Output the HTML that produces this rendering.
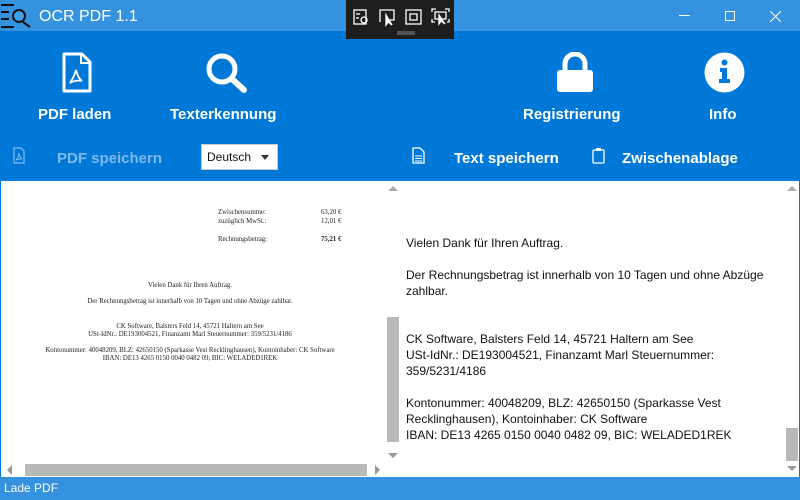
<!DOCTYPE html>
<html><head><meta charset="utf-8"><style>
*{margin:0;padding:0;box-sizing:border-box}
body{width:800px;height:500px;overflow:hidden;background:#0078d7;font-family:"Liberation Sans",sans-serif;position:relative}
.a{position:absolute}
.lbl{color:#fff;font-weight:bold;font-size:15px;white-space:nowrap}
.sm{color:#fff;font-weight:bold;font-size:15px;white-space:nowrap}
.doc{font-family:"Liberation Serif",serif;font-size:6.8px;color:#222;white-space:nowrap}
.rt{font-size:12px;color:#111;white-space:nowrap;line-height:16px}
.tri{width:0;height:0;position:absolute}
</style></head><body>
<div class="a" style="left:0;top:0;width:800px;height:31px;background:#3592de"></div>
<svg class="a" style="left:0;top:2px" width="32" height="28" viewBox="0 0 32 28">
<g stroke="#111" stroke-width="2"><line x1="1" y1="3" x2="14" y2="3"/><line x1="1" y1="10" x2="9" y2="10"/><line x1="1" y1="17" x2="9" y2="17"/><line x1="1" y1="25" x2="14" y2="25"/><line x1="23" y1="20" x2="30" y2="25"/></g>
<circle cx="19" cy="14" r="6" fill="#3aa0f0" stroke="#111" stroke-width="2"/></svg>
<div class="a" style="left:39px;top:8px;color:#fff;font-size:16px">OCR PDF 1.1</div>
<div class="a" style="left:346px;top:0;width:108px;height:39px;background:#1e1e1e"></div>
<svg class="a" style="left:346px;top:0" width="108" height="39" viewBox="0 0 108 39" fill="none" stroke="#fff" stroke-width="1.3">
<rect x="8" y="10" width="12" height="14"/><line x1="10" y1="14" x2="14" y2="14"/><line x1="10" y1="18" x2="13" y2="18"/><circle cx="18" cy="20" r="3"/>
<path d="M34 22V10h14v10h-6"/><path d="M40 15l0 10 2-3 4 3z" fill="#fff"/>
<rect x="60" y="10" width="15" height="14"/><rect x="64" y="14" width="7" height="6"/>
<path d="M86 12v-3h4M99 9h4v3M86 19v3h3M103 19v3h-2"/><rect x="89" y="12" width="11" height="7"/><path d="M93 15l0 9 2-3 4 3z" fill="#fff"/>
<line x1="51" y1="32" x2="69" y2="32" stroke="#888" stroke-width="1"/><line x1="51" y1="34" x2="69" y2="34" stroke="#888" stroke-width="1"/>
</svg>
<div class="a" style="left:679px;top:15px;width:11px;height:1px;background:#fff"></div>
<div class="a" style="left:725px;top:11px;width:10px;height:10px;border:1px solid #fff"></div>
<svg class="a" style="left:770px;top:11px" width="11" height="11"><path d="M0 0L11 11M11 0L0 11" stroke="#fff"/></svg>
<svg class="a" style="left:61px;top:52px" width="31" height="41" viewBox="0 0 31 41"><path d="M3 2h18l8 8v29H3z" fill="none" stroke="#fff" stroke-width="3" stroke-linejoin="round"/><path d="M20 2v9h9" fill="none" stroke="#fff" stroke-width="2"/><path d="M15 18c-1 4-4 10-6 13 3-2 8-3 12-2-3-2-5-7-6-11z" fill="none" stroke="#fff" stroke-width="1.8"/></svg>
<svg class="a" style="left:205px;top:52px" width="44" height="42" viewBox="0 0 44 42"><circle cx="17" cy="17" r="13" fill="none" stroke="#fff" stroke-width="5"/><line x1="27" y1="27" x2="39" y2="38" stroke="#fff" stroke-width="6" stroke-linecap="round"/></svg>
<div class="a lbl" style="left:38px;top:106px">PDF laden</div>
<div class="a lbl" style="left:170px;top:106px">Texterkennung</div>
<svg class="a" style="left:556px;top:52px" width="38" height="41" viewBox="0 0 38 41"><path d="M9 19v-7a10 10 0 0 1 20 0v7" fill="none" stroke="#fff" stroke-width="5"/><rect x="1" y="18" width="36" height="22" rx="3" fill="#fff"/></svg>
<div class="a lbl" style="left:523px;top:106px">Registrierung</div>
<svg class="a" style="left:704px;top:52px" width="41" height="41" viewBox="0 0 41 41"><circle cx="20.5" cy="20.5" r="20" fill="#fff"/><circle cx="20.5" cy="10.5" r="3" fill="#0078d7"/><path d="M16 16h7v11h3v4H15v-4h3v-7h-2z" fill="#0078d7"/></svg>
<div class="a lbl" style="left:709px;top:106px">Info</div>
<svg class="a" style="left:13px;top:147px" width="12" height="17" viewBox="0 0 12 17" opacity="0.5"><path d="M1 1h7l3 3v12H1z" fill="none" stroke="#fff" stroke-width="1.2"/><path d="M6 6c0 2-1 5-3 7 2-1 4-1 6-1-2-1-3-4-3-6z" fill="none" stroke="#fff"/></svg>
<div class="a sm" style="left:57px;top:150px;color:#7fb8ea">PDF speichern</div>
<div class="a" style="left:201px;top:144px;width:77px;height:26px;background:#fff;border:1px solid #ccc"></div>
<div class="a" style="left:207px;top:150px;font-size:12px;color:#111">Deutsch</div>
<div class="tri" style="left:261px;top:155px;border-left:4px solid transparent;border-right:4px solid transparent;border-top:5px solid #333"></div>
<svg class="a" style="left:412px;top:147px" width="13" height="17" viewBox="0 0 13 17"><path d="M1 1h7l4 4v11H1z" fill="none" stroke="#fff" stroke-width="1.3"/><path d="M3 9h7M3 11.5h7M3 14h7" stroke="#fff"/></svg>
<div class="a sm" style="left:454px;top:150px">Text speichern</div>
<svg class="a" style="left:592px;top:147px" width="13" height="17" viewBox="0 0 13 17"><rect x="1" y="3" width="11" height="13" rx="1" fill="none" stroke="#fff" stroke-width="1.3"/><rect x="4" y="1" width="5" height="3" fill="#fff"/></svg>
<div class="a sm" style="left:622px;top:150px">Zwischenablage</div>
<div class="a" style="left:1px;top:181px;width:798px;height:296px;background:#fff"></div>
<div class="a doc" style="left:218px;top:209px">Zwischensumme:</div><div class="a doc" style="left:321px;top:209px">63,20 €</div>
<div class="a doc" style="left:218px;top:218px">zuzüglich MwSt.:</div><div class="a doc" style="left:321px;top:218px">12,01 €</div>
<div class="a doc" style="left:218px;top:236px">Rechnungsbetrag:</div><div class="a doc" style="left:321px;top:236px;font-weight:bold">75,21 €</div>
<div class="a doc" style="left:0;width:380px;text-align:center;top:282px">Vielen Dank für Ihren Auftrag.</div>
<div class="a doc" style="left:0;width:380px;text-align:center;top:298px">Der Rechnungsbetrag ist innerhalb von 10 Tagen und ohne Abzüge zahlbar.</div>
<div class="a doc" style="left:0;width:380px;text-align:center;top:323px">CK Software, Balsters Feld 14, 45721 Haltern am See</div>
<div class="a doc" style="left:0;width:380px;text-align:center;top:331px">USt-IdNr.: DE193004521, Finanzamt Marl Steuernummer: 359/5231/4186</div>
<div class="a doc" style="left:0;width:380px;text-align:center;top:347px">Kontonummer: 40048209, BLZ: 42650150 (Sparkasse Vest Recklinghausen), Kontoinhaber: CK Software</div>
<div class="a doc" style="left:0;width:380px;text-align:center;top:355px">IBAN: DE13 4265 0150 0040 0482 09, BIC: WELADED1REK</div>
<div class="a" style="left:25px;top:464px;width:342px;height:12px;background:#b8b8b8"></div>
<div class="tri" style="left:7px;top:465px;border-top:5px solid transparent;border-bottom:5px solid transparent;border-right:5px solid #999"></div>
<div class="tri" style="left:375px;top:465px;border-top:5px solid transparent;border-bottom:5px solid transparent;border-left:5px solid #999"></div>
<div class="a" style="left:387px;top:317px;width:12px;height:125px;background:#b8b8b8"></div>
<div class="tri" style="left:388px;top:186px;border-left:5px solid transparent;border-right:5px solid transparent;border-bottom:5px solid #aaa"></div>
<div class="tri" style="left:388px;top:453px;border-left:5px solid transparent;border-right:5px solid transparent;border-top:5px solid #999"></div>
<div class="a" style="left:786px;top:428px;width:12px;height:33px;background:#b8b8b8"></div>
<div class="tri" style="left:787px;top:186px;border-left:5px solid transparent;border-right:5px solid transparent;border-bottom:5px solid #aaa"></div>
<div class="tri" style="left:787px;top:466px;border-left:5px solid transparent;border-right:5px solid transparent;border-top:5px solid #999"></div>
<div class="a rt" style="left:406px;top:235px">Vielen Dank für Ihren Auftrag.<br><br>Der Rechnungsbetrag ist innerhalb von 10 Tagen und ohne Abzüge<br>zahlbar.<br><br><br>CK Software, Balsters Feld 14, 45721 Haltern am See<br>USt-IdNr.: DE193004521, Finanzamt Marl Steuernummer:<br>359/5231/4186<br><br>Kontonummer: 40048209, BLZ: 42650150 (Sparkasse Vest<br>Recklinghausen), Kontoinhaber: CK Software<br>IBAN: DE13 4265 0150 0040 0482 09, BIC: WELADED1REK</div>
<div class="a" style="left:0;top:477px;width:800px;height:23px;background:#3592de"></div>
<div class="a" style="left:4px;top:481px;color:#fff;font-size:12px">Lade PDF</div>
</body></html>
